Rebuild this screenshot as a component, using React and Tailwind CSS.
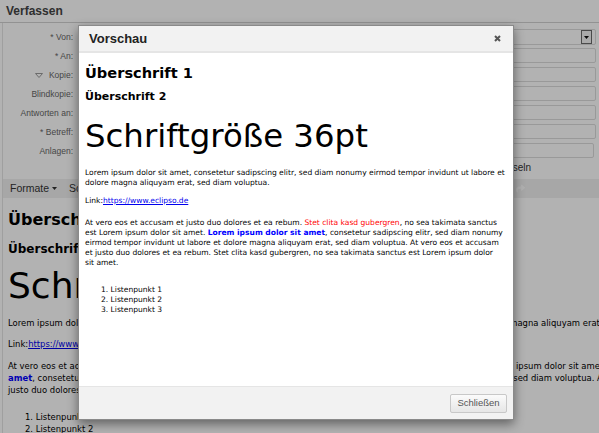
import React from "react";
import { FaShare } from "react-icons/fa";

const DV = "font-['DejaVu_Sans',Verdana,sans-serif]";

function Input({ last }) {
  return (
    <div
      className={`mt-[1px] h-[15px] flex-1 rounded-[2px] border border-[#dcdcdc] bg-white ${
        last ? "mr-[5px]" : "mr-[3px]"
      }`}
    />
  );
}

export default function App() {
  const labels = [
    "* Von:",
    "* An:",
    "Kopie:",
    "Blindkopie:",
    "Antworten an:",
    "* Betreff:",
    "Anlagen:",
  ];
  return (
    <div className="relative w-[599px] h-[433px] overflow-hidden bg-white font-['Liberation_Sans',Arial,sans-serif]">
      {/* ---------- underlying page ---------- */}
      <div className="h-[23px] border-b border-[#d2d2d2] pl-[6px] flex items-center text-[12px] font-bold text-[#444]">
        Verfassen
      </div>
      <div className="ml-[2px] border-l border-[#e4e4e4]">
        <div className="pt-[5px]">
          {labels.map((l, i) => (
            <div key={l} className="h-[19px] flex items-start">
              <div className="w-[70px] h-[19px] flex items-center justify-end text-[8.5px] text-[#666] whitespace-nowrap">
                {i === 2 && (
                  <svg width="8" height="5" viewBox="0 0 8 5" className="mr-[6px]">
                    <polygon points="0.5,0.5 7.5,0.5 4,4.5" fill="none" stroke="#9a9a9a" strokeWidth="1" />
                  </svg>
                )}
                {l}
              </div>
              <div className="w-[5px]" />
              {i === 0 ? (
                <div className="mt-[1px] h-[16px] flex-1 mr-[3px] border border-[#dcdcdc] rounded-[2px] bg-white flex items-center justify-end pr-[3px]">
                  <div className="w-[11px] h-[14px] border border-[#6a6a6a] bg-[#f4f4f4] flex items-center justify-center">
                    <svg width="5" height="3" viewBox="0 0 5 3">
                      <polygon points="0,0 5,0 2.5,3" fill="#111" />
                    </svg>
                  </div>
                </div>
              ) : (
                <Input last={i === 6} />
              )}
            </div>
          ))}
        </div>
        <div className="h-[14px] text-right pr-[68px] text-[10px] leading-[14px] text-[#333] whitespace-nowrap">
          Dateien hinzufügen oder Anhänge wechseln
        </div>
        <div className="mt-[4px] h-[19px] bg-[#efefef] flex items-center pl-[7px] text-[10.5px] text-[#333]">
          <span>Formate</span>
          <svg width="5" height="3" viewBox="0 0 5 3" className="ml-[3px]">
            <polygon points="0,0 5,0 2.5,3" fill="#333" />
          </svg>
          <span className="ml-[12px]">Schriftart</span>
          <FaShare className="ml-auto mr-[74px] text-[#fdfdfd]" size={9} />
        </div>
        <div className={`pt-[12px] pl-[5px] text-black ${DV}`}>
          <div className="text-[16px] leading-[20px] font-bold whitespace-nowrap">Überschrift 1</div>
          <div className="mt-[12px] text-[12px] leading-[14px] font-bold whitespace-nowrap">Überschrift 2</div>
          <div className="mt-[9px] text-[36px] leading-[42px] whitespace-nowrap">Schriftgröße 36pt</div>
          <div className="mt-[10px] text-[8.45px] leading-[12px] whitespace-nowrap">
            Lorem ipsum dolor sit amet, consetetur sadipscing elitr, sed diam nonumy eirmod tempor invidunt ut labore et dolore magna aliquyam erat, sed diam voluptua.
          </div>
          <div className="mt-[9px] text-[8.45px] leading-[12px] whitespace-nowrap">
            Link:<span className="text-[#0000ee] underline">https://www.eclipso.de</span>
          </div>
          <div className="mt-[10px] text-[8.45px] leading-[12px] whitespace-nowrap">
            <div>
              At vero eos et accusam et justo duo dolores et ea rebum.{" "}
              <span className="text-[#ff0000]">Stet clita kasd gubergren</span>, no sea takimata sanctus est Lorem ipsum dolor sit amet.{" "}
              <span className="text-[#0000ff] font-bold">Lorem ipsum dolor sit</span>
            </div>
            <div>
              <span className="text-[#0000ff] font-bold">amet</span>, consetetur sadipscing elitr, sed diam nonumy eirmod tempor invidunt ut labore et dolore magna aliquyam erat, sed diam voluptua. At vero eos et accusam et
            </div>
            <div>
              justo duo dolores et ea rebum. Stet clita kasd gubergren, no sea takimata sanctus est Lorem ipsum dolor sit amet.
            </div>
          </div>
          <ol className="mt-[15px] pl-[17px] list-decimal list-inside text-[8.45px] leading-[12px] whitespace-nowrap">
            <li>Listenpunkt 1</li>
            <li>Listenpunkt 2</li>
            <li>Listenpunkt 3</li>
          </ol>
        </div>
      </div>

      {/* ---------- backdrop ---------- */}
      <div className="absolute inset-0 bg-black/30" />

      {/* ---------- modal ---------- */}
      <div className="absolute left-[78px] top-[25px] w-[436px] h-[395px] flex flex-col border border-[#8a8a8a] bg-white shadow-[0_4px_10px_rgba(0,0,0,0.45)]">
        <div className="h-[25px] shrink-0 bg-[#f2f2f2] border-b-2 border-[#e5e5e5] box-content flex items-center pl-[10px] pr-[12px]">
          <span className="text-[13px] font-bold text-[#222]">Vorschau</span>
          <svg width="7" height="7" viewBox="0 0 7 7" className="ml-auto">
            <path d="M1 1L6 6M6 1L1 6" stroke="#555" strokeWidth="2" />
          </svg>
        </div>
        <div className={`flex-1 bg-white pt-[12px] pl-[6px] text-black ${DV}`}>
          <div className="text-[14.6px] leading-[16px] font-bold whitespace-nowrap">Überschrift 1</div>
          <div className="mt-[9px] text-[11px] leading-[13px] font-bold whitespace-nowrap">Überschrift 2</div>
          <div className="mt-[14px] text-[32.4px] leading-[38px] whitespace-nowrap">Schriftgröße 36pt</div>
          <div className="mt-[13px] text-[7.55px] leading-[10px] whitespace-nowrap">
            <div>Lorem ipsum dolor sit amet, consetetur sadipscing elitr, sed diam nonumy eirmod tempor invidunt ut labore et</div>
            <div>dolore magna aliquyam erat, sed diam voluptua.</div>
          </div>
          <div className="mt-[8px] text-[7.55px] leading-[10px] whitespace-nowrap">
            Link:<span className="text-[#0000ee] underline">https://www.eclipso.de</span>
          </div>
          <div className="mt-[12px] text-[7.55px] leading-[10px] whitespace-nowrap">
            <div>
              At vero eos et accusam et justo duo dolores et ea rebum.{" "}
              <span className="text-[#ff0000]">Stet clita kasd gubergren</span>, no sea takimata sanctus
            </div>
            <div>
              est Lorem ipsum dolor sit amet.{" "}
              <span className="text-[#0000ff] font-bold">Lorem ipsum dolor sit amet</span>, consetetur sadipscing elitr, sed diam nonumy
            </div>
            <div>eirmod tempor invidunt ut labore et dolore magna aliquyam erat, sed diam voluptua. At vero eos et accusam</div>
            <div>et justo duo dolores et ea rebum. Stet clita kasd gubergren, no sea takimata sanctus est Lorem ipsum dolor</div>
            <div>sit amet.</div>
          </div>
          <ol className="mt-[17px] pl-[16px] list-decimal list-inside text-[7.55px] leading-[10px] whitespace-nowrap">
            <li>Listenpunkt 1</li>
            <li>Listenpunkt 2</li>
            <li>Listenpunkt 3</li>
          </ol>
        </div>
        <div className="h-[32px] shrink-0 border-t border-[#e5e5e5] bg-[#f2f2f2] box-content flex items-center justify-end pr-[6px]">
          <button className="w-[57px] h-[19px] rounded-[2px] border border-[#c8c8c8] bg-gradient-to-b from-[#fbfbfb] to-[#e6e6e6] text-[9.5px] text-[#555] leading-none">
            Schließen
          </button>
        </div>
      </div>
    </div>
  );
}
